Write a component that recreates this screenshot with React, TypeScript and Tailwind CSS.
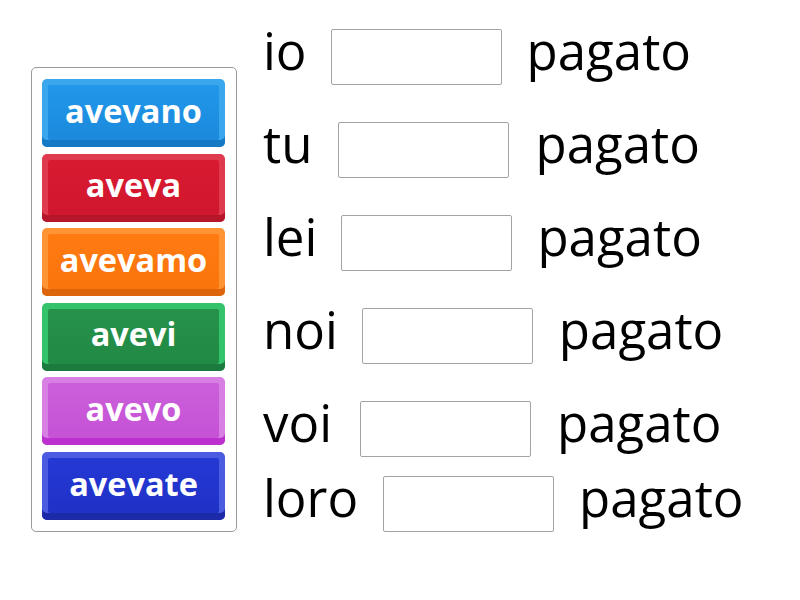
import React from 'react';

const tiles = [
  { label: 'avevano', edge: 'bg-[#3aa6ee]', face: 'bg-[linear-gradient(#2198ea,#1b89dc)]', low: 'shadow-[inset_0_-7px_0_#1679c6]' },
  { label: 'aveva', edge: 'bg-[#e03a4e]', face: 'bg-[linear-gradient(#d91a31,#d0172d)]', low: 'shadow-[inset_0_-7px_0_#b5162a]' },
  { label: 'avevamo', edge: 'bg-[#ff9434]', face: 'bg-[linear-gradient(#ff7b12,#fb740c)]', low: 'shadow-[inset_0_-7px_0_#dc640a]' },
  { label: 'avevi', edge: 'bg-[#33c46b]', face: 'bg-[linear-gradient(#26924c,#218a45)]', low: 'shadow-[inset_0_-7px_0_#1d7a3e]' },
  { label: 'avevo', edge: 'bg-[#d77fe3]', face: 'bg-[linear-gradient(#cb5fda,#c652d6)]', low: 'shadow-[inset_0_-7px_0_#bd30d0]' },
  { label: 'avevate', edge: 'bg-[#4b5ce1]', face: 'bg-[linear-gradient(#2438d4,#1f31c6)]', low: 'shadow-[inset_0_-7px_0_#1c2aa8]' },
];

// spacing per row is a little uneven in the original, keep it that way
const rows = [
  { subject: 'io', before: 'mr-[24px]', after: 'ml-[25px]', extra: '' },
  { subject: 'tu', before: 'mr-[26px]', after: 'ml-[26px]', extra: '' },
  { subject: 'lei', before: 'mr-[24px]', after: 'ml-[25px]', extra: '' },
  { subject: 'noi', before: 'mr-[24px]', after: 'ml-[26px]', extra: '' },
  { subject: 'voi', before: 'mr-[28px]', after: 'ml-[26px]', extra: '' },
  { subject: 'loro', before: 'mr-[25px]', after: 'ml-[25px]', extra: '-mt-[18px]' },
];

function Tile({ tile }: { tile: (typeof tiles)[number] }) {
  return (
    <div className={`relative flex h-[68px] rounded-[5px] px-[6px] pt-[6px] pb-[7px] ${tile.edge} ${tile.low}`}>
      <div className={`flex-1 rounded-[2px] ${tile.face}`} />
      <div className="absolute inset-0 flex items-center justify-center pb-[4px] text-[32.5px] font-bold text-white">
        {tile.label}
      </div>
    </div>
  );
}

export default function App() {
  return (
    <div className="flex h-[600px] w-[800px] bg-white font-['Open_Sans',sans-serif]">
      {/* Word bank */}
      <div className="ml-[31px] mt-[67px] flex h-[465px] w-[206px] flex-col gap-[6.6px] rounded-[5px] border border-[#9a9a9a] bg-white pl-[10px] pr-[11px] pt-[11px]">
        {tiles.map((t) => (
          <Tile key={t.label} tile={t} />
        ))}
      </div>

      {/* Sentences */}
      <div className="ml-[26px] mt-[10px] flex flex-col">
        {rows.map((r) => (
          <div key={r.subject} className={`flex h-[93px] items-center text-[51px] text-black ${r.extra}`}>
            <span className={`mb-[12px] leading-none ${r.before}`}>{r.subject}</span>
            <div className="h-[56px] w-[171px] rounded-[2px] border border-[#a3a3a3] bg-white" />
            <span className={`mb-[12px] leading-none ${r.after}`}>pagato</span>
          </div>
        ))}
      </div>
    </div>
  );
}
